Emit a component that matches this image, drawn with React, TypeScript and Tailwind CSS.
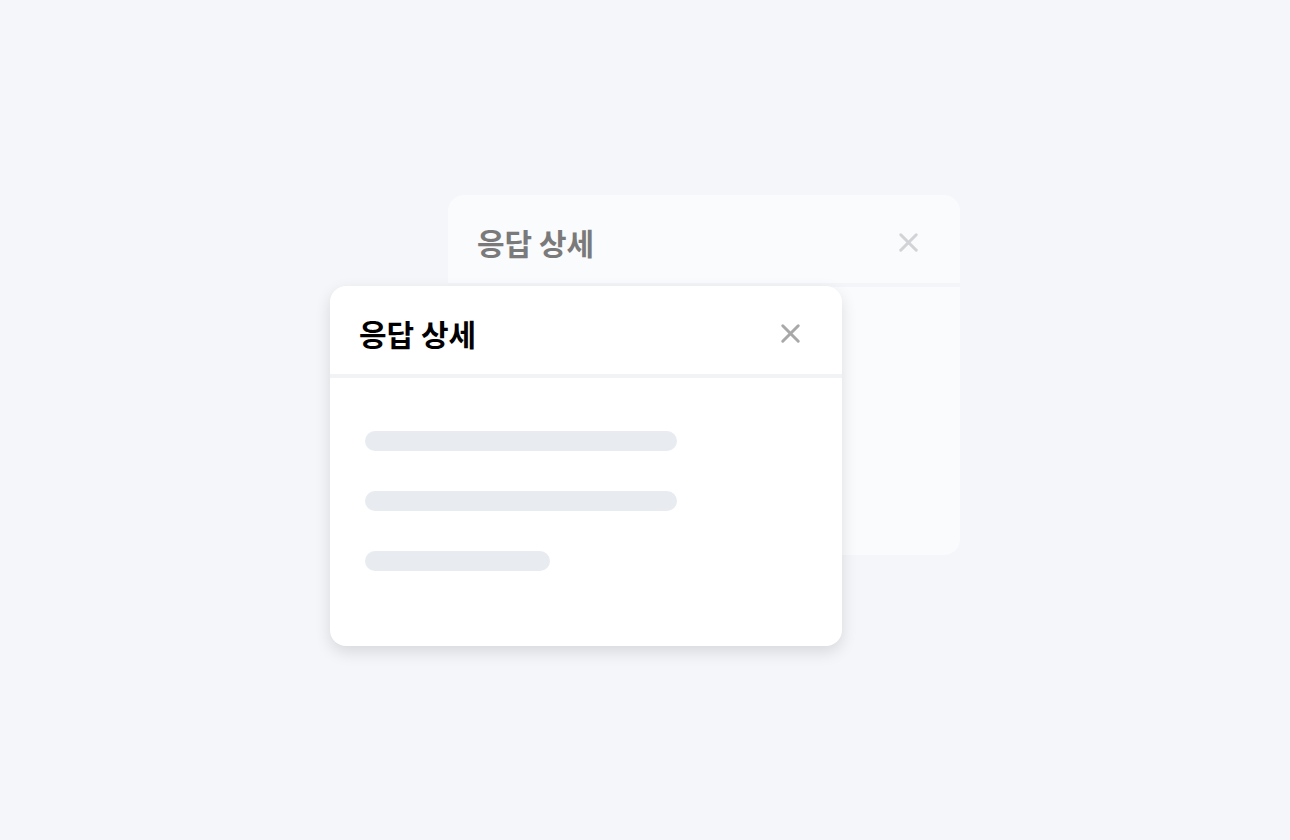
import { X } from "lucide-react";

type Tone = {
  card: string;
  title: string;
  icon: string;
  line: string;
  bar: string;
};

const front: Tone = {
  card: "bg-white",
  title: "text-black",
  icon: "text-[#a8a8a8]",
  line: "border-[#f2f3f5]",
  bar: "bg-[#e8ebf0]",
};

// the back card is the same dialog, faded out
const back: Tone = {
  card: "bg-[#fafbfd]",
  title: "text-[#7a7a7a]",
  icon: "text-[#d2d3d6]",
  line: "border-[#f4f5f8]",
  bar: "bg-[#eff1f5]",
};

function DetailCard({ tone, className }: { tone: Tone; className: string }) {
  return (
    <div className={`absolute flex h-[360px] w-[512px] flex-col overflow-hidden rounded-2xl ${tone.card} ${className}`}>
      <div className={`flex h-[92px] shrink-0 items-center justify-between border-b-4 pl-[29px] pr-[36px] pt-2 ${tone.line}`}>
        <div className={`text-[30px] font-bold ${tone.title}`}>응답 상세</div>
        <X className={`h-[31px] w-[31px] ${tone.icon}`} strokeWidth={2.3} />
      </div>
      <div className="flex flex-col gap-10 px-[35px] pt-[53px]">
        <div className={`h-5 w-[312px] rounded-full ${tone.bar}`} />
        <div className={`h-5 w-[312px] rounded-full ${tone.bar}`} />
        <div className={`h-5 w-[185px] rounded-full ${tone.bar}`} />
      </div>
    </div>
  );
}

export default function App() {
  return (
    <div
      className="flex h-[840px] w-full items-center justify-center bg-[#f5f6fa]"
      style={{ fontFamily: '"Noto Sans CJK KR", "Noto Sans", sans-serif' }}
    >
      <div className="relative h-[451px] w-[630px]">
        <DetailCard tone={back} className="left-[118px] top-0" />
        <DetailCard tone={front} className="left-0 top-[91px] shadow-[0_6px_16px_rgba(0,0,0,0.12)]" />
      </div>
    </div>
  );
}
